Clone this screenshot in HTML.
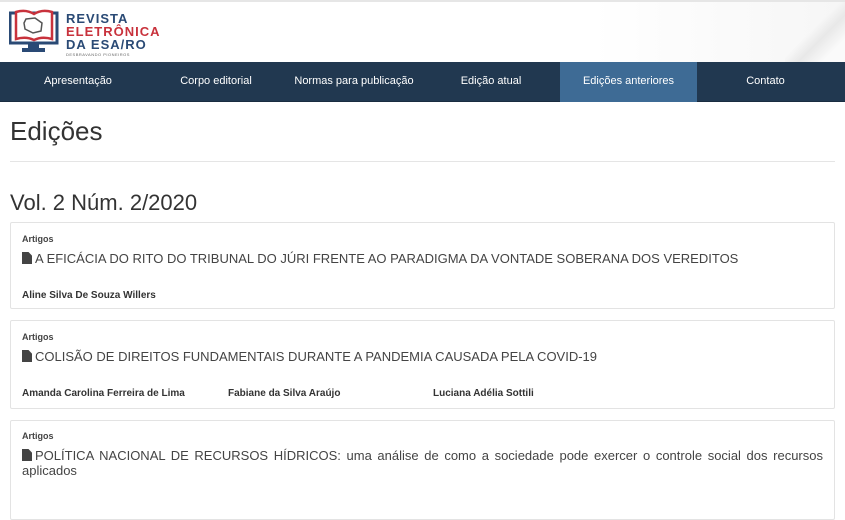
<!DOCTYPE html>
<html><head><meta charset="utf-8"><style>
*{margin:0;padding:0;box-sizing:border-box}
body{width:845px;height:500px;overflow:hidden;background:#fff;font-family:"Liberation Sans",sans-serif;color:#333;position:relative}
.top{position:absolute;left:0;top:0;width:845px;height:62px;border-top:2px solid #e6e6e6;background:linear-gradient(90deg,#fff 70%,#f6f6f6)}
.swoosh{position:absolute;right:0;top:0;width:60px;height:62px;background:linear-gradient(135deg,transparent 45%,#e8e8e8 60%,#fafafa 80%)}
.nav{position:absolute;left:0;top:62px;width:845px;height:40px;background:#213850;border-bottom:1px solid #1a2c40}
.nav div{position:absolute;top:0;height:40px;line-height:38px;color:#fff;font-size:11px;text-align:center}
.nav .act{background:#3e6b95}
h1{position:absolute;left:10px;top:116px;font-size:26px;font-weight:normal;color:#333}
.hr{position:absolute;left:10px;top:161px;width:825px;border-top:1px solid #e5e5e5}
h2{position:absolute;left:10px;top:190px;font-size:22px;font-weight:normal;color:#333}
.card{position:absolute;left:10px;width:825px;border:1px solid #e3e3e3;border-radius:2px}
.sec{position:absolute;left:11px;font-size:9px;font-weight:bold;color:#444}
.tit{position:absolute;left:11px;right:11px;font-size:13px;color:#444;line-height:15px;text-align:justify}
.au{position:absolute;font-size:10px;font-weight:bold;color:#333}
.ic{display:inline-block;width:10px;height:12px;background:#444;margin-right:3px;vertical-align:-1px;clip-path:polygon(0 0,65% 0,100% 30%,100% 100%,0 100%)}
</style></head><body>
<div class="top"><div class="swoosh"></div>
<svg style="position:absolute;left:9px;top:7px" width="50" height="46" viewBox="0 0 50 46">
<rect x="1" y="4" width="47" height="30" fill="none" stroke="#2a4a75" stroke-width="3"/>
<path d="M7 3 Q17 0 25 5 Q33 0 43 3 V30 Q33 27 25 31 Q17 27 7 30Z" fill="#fff" stroke="#c8323c" stroke-width="2.5"/>
<path d="M17 10 L26 9 L33 14 L32 22 L24 24 L16 20 L15 14Z" fill="none" stroke="#555" stroke-width="1.5"/>
<rect x="19" y="34" width="11" height="5" fill="#2a4a75"/><rect x="13" y="39" width="23" height="4" fill="#2a4a75"/>
</svg>
<div style="position:absolute;left:66px;top:10px;font-size:13px;font-weight:bold;letter-spacing:1px;line-height:13px;color:#2a4a75">REVISTA<br><span style="color:#c8323c">ELETRÔNICA</span><br>DA ESA/RO</div>
<div style="position:absolute;left:66px;top:50px;font-size:4px;color:#666;letter-spacing:.5px">DESBRAVANDO PIONEIROS</div>
</div>
<div class="nav">
<div style="left:0;width:156px">Apresentação</div>
<div style="left:156px;width:120px">Corpo editorial</div>
<div style="left:276px;width:156px">Normas para publicação</div>
<div style="left:432px;width:118px">Edição atual</div>
<div class="act" style="left:560px;width:137px">Edições anteriores</div>
<div style="left:697px;width:137px">Contato</div>
</div>
<h1>Edições</h1>
<div class="hr"></div>
<h2>Vol. 2 Núm. 2/2020</h2>
<div class="card" style="top:222px;height:87px">
<div class="sec" style="top:11px">Artigos</div>
<div class="tit" style="top:28px"><span class="ic"></span>A EFICÁCIA DO RITO DO TRIBUNAL DO JÚRI FRENTE AO PARADIGMA DA VONTADE SOBERANA DOS VEREDITOS</div>
<div class="au" style="left:11px;top:67px">Aline Silva De Souza Willers</div>
</div>
<div class="card" style="top:320px;height:89px">
<div class="sec" style="top:11px">Artigos</div>
<div class="tit" style="top:28px"><span class="ic"></span>COLISÃO DE DIREITOS FUNDAMENTAIS DURANTE A PANDEMIA CAUSADA PELA COVID-19</div>
<div class="au" style="left:11px;top:67px">Amanda Carolina Ferreira de Lima</div>
<div class="au" style="left:217px;top:67px">Fabiane da Silva Araújo</div>
<div class="au" style="left:422px;top:67px">Luciana Adélia Sottili</div>
</div>
<div class="card" style="top:420px;height:100px">
<div class="sec" style="top:10px">Artigos</div>
<div class="tit" style="top:27px"><span class="ic"></span>POLÍTICA NACIONAL DE RECURSOS HÍDRICOS: uma análise de como a sociedade pode exercer o controle social dos recursos aplicados</div>
</div>
</body></html>
